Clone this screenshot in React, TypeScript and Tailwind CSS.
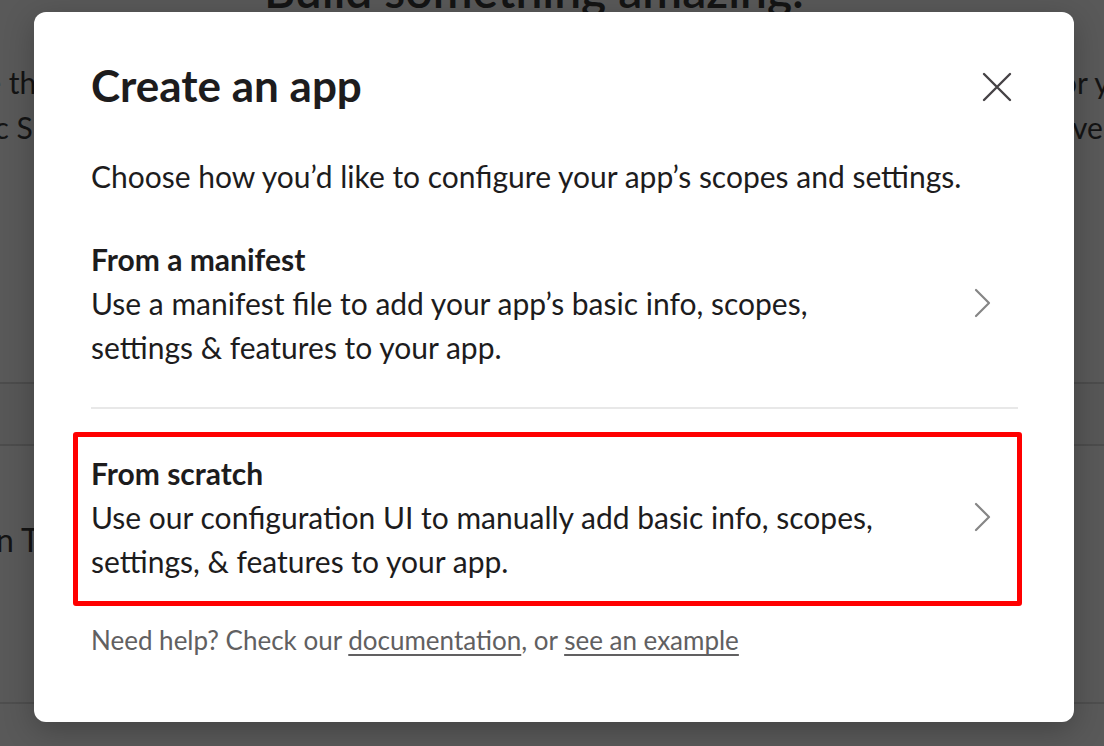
import React from "react";

function Chevron() {
  return (
    <svg width="18" height="30" viewBox="0 0 18 30" fill="none" aria-hidden="true">
      <polyline
        points="2,2 15,15 2,28"
        stroke="#868686"
        strokeWidth="2.2"
        strokeLinecap="round"
        strokeLinejoin="round"
      />
    </svg>
  );
}

function CloseIcon() {
  return (
    <svg width="30" height="30" viewBox="0 0 30 30" fill="none" aria-hidden="true">
      <path d="M2 2 L28 28 M28 2 L2 28" stroke="#454245" strokeWidth="2.4" strokeLinecap="round" />
    </svg>
  );
}

type Option = {
  title: string;
  lines: string[];
  highlighted?: boolean;
};

const options: Option[] = [
  {
    title: "From a manifest",
    lines: ["Use a manifest file to add your app’s basic info, scopes,", "settings & features to your app."],
  },
  {
    title: "From scratch",
    lines: ["Use our configuration UI to manually add basic info, scopes,", "settings, & features to your app."],
    highlighted: true,
  },
];

function OptionRow({ option }: { option: Option }) {
  return (
    <div className="relative flex items-center justify-between pr-[26px]">
      <div className="flex flex-col">
        <div className="text-[30px] font-bold leading-[44px] text-[#1d1c1d]">{option.title}</div>
        {option.lines.map((l) => (
          <div key={l} className="whitespace-nowrap text-[30px] leading-[44px] text-[#1d1c1d]">
            {l}
          </div>
        ))}
      </div>
      <Chevron />
      {option.highlighted && (
        <div className="pointer-events-none absolute -top-[19px] -bottom-[23px] -left-[18px] -right-[4px] rounded-[3px] border-[5px] border-[#ff0000]" />
      )}
    </div>
  );
}

export default function App() {
  return (
    <div
      className="relative h-[746px] w-[1104px] overflow-hidden bg-[#595959] text-[#141414]"
      style={{ fontFamily: "Lato, 'Open Sans', 'Noto Sans', sans-serif" }}
    >
      {/* page behind the overlay */}
      <div className="flex flex-col">
        <div className="-mt-[40px] whitespace-nowrap pl-[264px] text-[48px] font-semibold leading-[60px]">
          Build something amazing.
        </div>
        <div className="mt-[40px] flex justify-between whitespace-nowrap text-[30px] leading-[45px]">
          <div className="flex w-[52px] justify-end overflow-hidden">
            <span>Explore the</span>
          </div>
          <div className="w-[54px] overflow-hidden">
            <span>for your</span>
          </div>
        </div>
        <div className="flex justify-between whitespace-nowrap text-[30px] leading-[45px]">
          <div className="flex w-[84px] justify-end overflow-hidden">
            <span>basic Slack</span>
          </div>
          <div className="w-[32px] overflow-hidden">
            <span>verify</span>
          </div>
        </div>
        <div className="mt-[232px] h-[64px] border-y-2 border-[#4c4c4c] bg-[#575757]" />
        <div className="mt-[74px] flex whitespace-nowrap text-[32px] leading-[40px]">
          <div className="flex w-[40px] justify-end overflow-hidden">
            <span>Build on T</span>
          </div>
        </div>
        <div className="mt-[142px] h-[2px] bg-[#4e4e4e]" />
      </div>

      {/* modal */}
      <div className="absolute inset-0 flex items-start pl-[34px] pt-[12px]">
        <div className="flex h-[710px] w-[1040px] flex-col rounded-[12px] bg-white pl-[57px] pr-[56px] pt-[47px] shadow-[0_8px_30px_rgba(0,0,0,0.25)]">
          <div className="flex items-center justify-between">
            <h1 className="text-[44px] font-bold leading-[52px] text-[#1d1c1d]">Create an app</h1>
            <button className="mr-[5px] mt-[4px] flex h-[32px] w-[32px] items-center justify-center">
              <CloseIcon />
            </button>
          </div>
          <p className="mt-[43px] text-[30px] leading-[44px] text-[#1d1c1d]">
            Choose how you’d like to configure your app’s scopes and settings.
          </p>
          <div className="pb-[38px] pt-[39px]">
            <OptionRow option={options[0]} />
          </div>
          <div className="h-[2px] bg-[#e8e8e8]" />
          <div className="pb-[39px] pt-[42px]">
            <OptionRow option={options[1]} />
          </div>
          <p className="text-[26px] leading-[36px] text-[#616061]">
            Need help? Check our <a className="underline underline-offset-[4px]">documentation</a>, or{" "}
            <a className="underline underline-offset-[4px]">see an example</a>
          </p>
        </div>
      </div>
    </div>
  );
}
